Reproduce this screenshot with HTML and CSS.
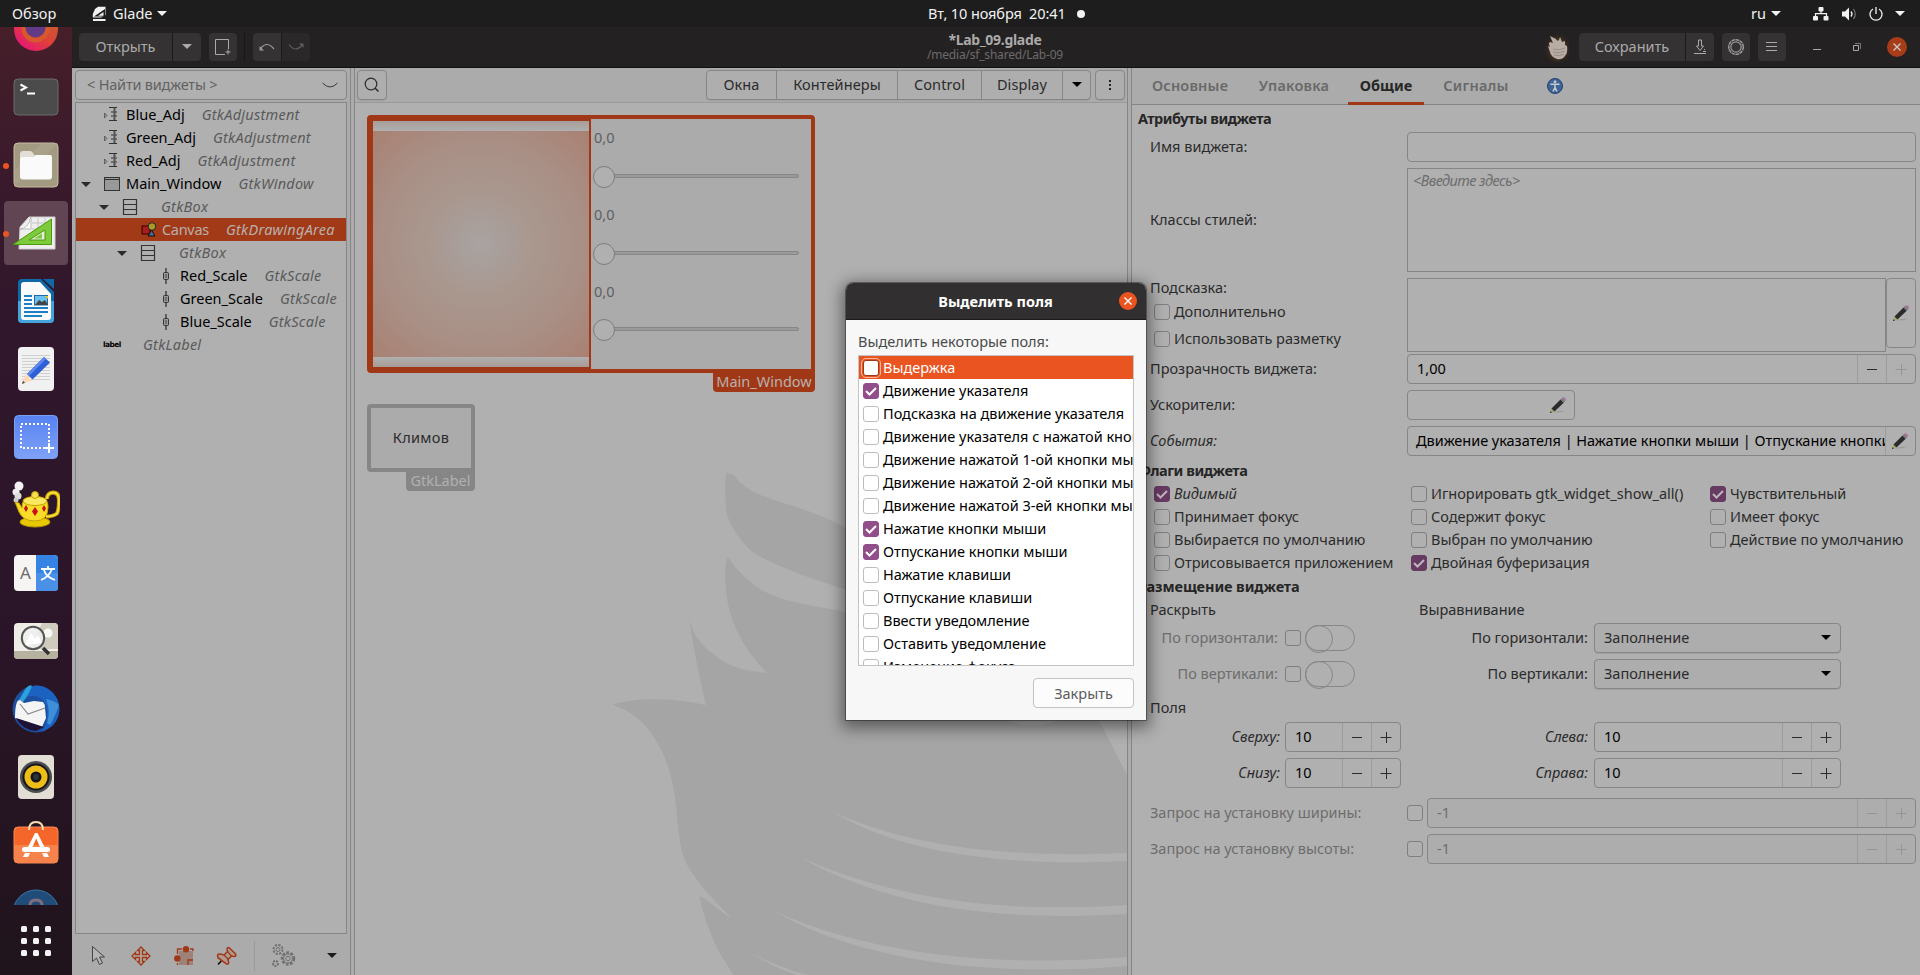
FILE: index.html
```html
<!DOCTYPE html>
<html lang="ru">
<head>
<meta charset="utf-8">
<title>Lab_09.glade</title>
<link rel="stylesheet" href="styles.css">
</head>
<body>
<svg class="defs" width="0" height="0">
  <defs>
    <symbol id="tri" viewBox="0 0 10 5"><path d="M0 0h10L5 5z"/></symbol>
    <symbol id="pencil" viewBox="0 0 18 18">
      <path d="M4 16.5q6-2.500 12-1.500q-5 1.500-12 1.500z" fill="#888" opacity=".6"/>
      <path d="M1 17l1.500-4.500 3 3z" fill="#a8a25e"/>
      <path d="M1 17l.6-1.800 1.200 1.200z" fill="#111"/>
      <path d="M2.500 12.500L11.500 3.500l3.200 3.200L5.500 15.500z" fill="#2b2b2b"/>
      <path d="M11.500 3.500l1.500-1.500 3.200 3.200-1.500 1.500z" fill="#777"/>
      <path d="M13 2q1.500-1.500 3.200.1t0 3.100z" fill="#a8719a"/>
    </symbol>
    <symbol id="minus" viewBox="0 0 12 12"><path d="M1 6.500h10" stroke="currentColor"/></symbol>
    <symbol id="plus" viewBox="0 0 12 12"><path d="M.5 6.500h11M6.500 1v11" stroke="currentColor"/></symbol>
    <symbol id="tick" viewBox="0 0 16 16"><path d="M3 8l3.500 3.500L13 5" fill="none" stroke="currentColor" stroke-width="2"/></symbol>
    <symbol id="adj" viewBox="0 0 18 18"><path d="M1.500 7v5l2.500-2.500z" fill="#999" stroke="#444" stroke-width=".7"/><path d="M6 1.500h8M8 6h6M8 10h6M6 14.500h8" stroke="#333"/><path d="M11.500 2v12" stroke="#555" stroke-width="2"/></symbol>
    <symbol id="box" viewBox="0 0 16 18"><path d="M1.500 1.500h13v15h-13zM1.500 6.500h13M1.500 11.500h13" fill="none" stroke="#333" stroke-width="1.200"/></symbol>
    <symbol id="scale" viewBox="0 0 10 18"><path d="M5 1v16" stroke="#333" stroke-width="1.300"/><rect x="2.500" y="5.500" width="5" height="7" rx="1" fill="#999" stroke="#333"/><path d="M4 8h2M4 10h2" stroke="#333" stroke-width=".8"/></symbol>
  </defs>
</svg>

<header class="topbar">
  <span class="tb-over">Обзор</span>
  <svg class="tb-glade" width="15" height="16" viewBox="0 0 15 16"><path d="M3 3L6 .8h7.500V9L9 11.500H.8V8z" fill="#f2f2f2"/><path d="M2 10.500L13 3v7.500z" fill="#1d1d1d"/><path d="M6 9.800l5.500-3.800v3.800z" fill="#f2f2f2"/><path d="M1 14h12.500" stroke="#f2f2f2" stroke-width="2"/></svg>
  <span class="tb-app">Glade</span>
  <svg class="tri tb-tri1" width="10" height="5"><use href="#tri"/></svg>
  <span class="tb-date">Вт, 10 ноября&nbsp; 20:41</span>
  <i class="tb-dot"></i>
  <span class="tb-lang">ru</span>
  <svg class="tri tb-tri2" width="10" height="5"><use href="#tri"/></svg>
  <svg class="tb-net" width="16" height="14" viewBox="0 0 16 14" fill="#f2f2f2"><rect x="5.500" y="0" width="5" height="4.500" rx="1"/><rect x="0" y="9" width="5" height="4.500" rx="1"/><rect x="10.500" y="9" width="5" height="4.500" rx="1"/><path d="M8 4v3M2.500 9.500V6.700h11v2.800" fill="none" stroke="#f2f2f2" stroke-width="1.200"/></svg>
  <svg class="tb-vol" width="15" height="14" viewBox="0 0 15 14"><path d="M0 4.500h3L7 .5v13L3 9.500H0z" fill="#f2f2f2"/><path d="M9 4.500q2 2.500 0 5" fill="none" stroke="#f2f2f2" stroke-width="1.300"/><path d="M11.500 2q3.500 5 0 10" fill="none" stroke="#777" stroke-width="1.200"/></svg>
  <svg class="tb-pow" width="14" height="14" viewBox="0 0 14 14"><path d="M4 2A6 6 0 1 0 10 2M7 0v7" fill="none" stroke="#f2f2f2" stroke-width="1.300"/></svg>
  <svg class="tri" width="10" height="5"><use href="#tri"/></svg>
</header>

<div class="desktop">
<nav class="dock">
  <div class="dock-list">
    <div class="slot"><svg width="48" height="48" viewBox="0 0 48 48"><defs><linearGradient id="ff" x1="1" y1="0" x2=".2" y2="1"><stop offset="0" stop-color="#b96b20"/><stop offset=".6" stop-color="#e0403c"/><stop offset="1" stop-color="#e8127a"/></linearGradient></defs><circle cx="24" cy="24" r="22" fill="url(#ff)"/><circle cx="23.500" cy="23.500" r="14" fill="#d8582c"/><circle cx="23.500" cy="22.500" r="10" fill="#633a86"/></svg></div>
    <div class="slot"><svg width="48" height="48" viewBox="0 0 48 48"><rect x="2" y="6" width="44" height="36" rx="4" fill="#4b4b4b" stroke="#6d6d6d"/><path d="M8.500 11.500l5.500 3-5.500 3" fill="none" stroke="#fff" stroke-width="2"/><path d="M15 20.500h8" stroke="#fff" stroke-width="2"/></svg></div>
    <div class="slot"><i class="run"></i><svg width="48" height="48" viewBox="0 0 48 48"><rect x="2" y="2" width="44" height="44" rx="4" fill="#a39a82" stroke="#c5bda6"/><path d="M2 30L30 2h16L2 46z" fill="#b0a890" opacity=".5"/><path d="M8 13q0-3 3-3h7q2 0 3 2l1 2h16q2 0 2 3v18q0 3-3 3H11q-3 0-3-3z" fill="#e3dfd6"/><rect x="8" y="16" width="32" height="22.500" rx="3" fill="#fafafa"/><path d="M8 18h12q2 0 4-4H38q2 0 2 3v10H8z" fill="#fafafa"/></svg></div>
    <div class="slot active"><i class="run"></i><svg width="48" height="48" viewBox="0 0 48 48"><path d="M8 18L17 8h26v32H7z" fill="#eee" stroke="#cfcfcf"/><path d="M8 20q8 0 11-12v12z" fill="#fff" stroke="#bbb"/><path d="M20 14h20M20 20h20M26 9v20M33 9v20" stroke="#bbb" stroke-width=".8"/><path d="M1 35.500L39.500 10v25.500z" fill="#7ccb3c" stroke="#4e9a06"/><path d="M17 31L33 21v10z" fill="#e8ede2" stroke="#4e9a06"/><path d="M22 29.500l8-5v5z" fill="#7ccb3c"/></svg></div>
    <div class="slot"><svg width="48" height="48" viewBox="0 0 48 48"><path d="M6 6q0-4 4-4h19l13 13v27q0 4-4 4H10q-4 0-4-4z" fill="#0d69a8"/><path d="M6 24h36v18q0 4-4 4H10q-4 0-4-4z" fill="#45a4dc"/><path d="M31 2h11v10z" fill="#0d69a8"/><path d="M9 8q0-3 3-3h16l11 12v23q0 3-3 3H12q-3 0-3-3z" fill="#fafafa"/><path d="M12 19h8M12 23h8M12 27h8M12 31h24M12 35h24M12 39h18" stroke="#1a7fc4" stroke-width="1.800"/><rect x="22.500" y="18.500" width="13" height="9.500" fill="#6cc0ee" stroke="#1a6aa8"/><path d="M23 28l4-5 3 2 3-2 3 5z" fill="#444"/><path d="M33 19h3v3z" fill="#f3c300"/></svg></div>
    <div class="slot"><svg width="48" height="48" viewBox="0 0 48 48"><rect x="6" y="2" width="36" height="44" rx="4" fill="#f1f1f1"/><path d="M10 10.500h28M10 13.500h28M10 16.500h28M10 19.500h28M10 22.500h28M10 25.500h28M10 28.500h28M10 31.500h28M10 34.500h28" stroke="#cfcfcf"/><path d="M10 39l3.500-10 6.500 6.500z" fill="#ffd9b8"/><path d="M10 39l1-3.200 2 2z" fill="#444"/><path d="M15 29L32 12l6 5.500-17.500 17z" fill="#2f5fd6"/><path d="M15 29L32 12l2 2-17 17z" fill="#5a88ef"/></svg></div>
    <div class="slot"><svg width="48" height="48" viewBox="0 0 48 48"><defs><linearGradient id="ss" x1="0" y1="0" x2="0" y2="1"><stop offset="0" stop-color="#5781f0"/><stop offset="1" stop-color="#7fa2f8"/></linearGradient></defs><rect x="2.500" y="2.500" width="43" height="43" rx="4" fill="url(#ss)" stroke="#7c9ff5"/><rect x="9" y="11" width="28" height="24" fill="none" stroke="#fff" stroke-width="2" stroke-dasharray="2 2"/><path d="M37 30v10M32 35h10" stroke="#fff" stroke-width="2"/></svg></div>
    <div class="slot"><svg width="48" height="48" viewBox="0 0 48 48"><circle cx="7" cy="5" r="4.500" fill="#f2f2f2"/><circle cx="4" cy="11" r="3.500" fill="#eee"/><circle cx="6" cy="15" r="3.500" fill="#ddd"/><circle cx="4" cy="19" r="2.500" fill="#ccc"/><path d="M35 18q0-6 6-6.500 6 0 6 8 0 9-2 13-4 3-11 3" fill="none" stroke="#c8a000" stroke-width="4"/><path d="M35 18q0-6 6-6.500 6 0 6 8 0 9-2 13-4 3-11 3" fill="none" stroke="#f6df3a" stroke-width="1.800"/><ellipse cx="23" cy="41" rx="15" ry="5" fill="#e8c800" stroke="#b89400"/><path d="M3 21l4 1 3 5q-1-11 13-11t13 10q0 14-13 14Q11 40 7 31z" fill="#f7dc28" stroke="#c8a000"/><ellipse cx="23" cy="20" rx="12" ry="4.500" fill="#fae960" stroke="#c8a000"/><circle cx="23" cy="14" r="3.500" fill="#f7e050" stroke="#c8a000"/><path d="M23 26l3 4.500-3 4.500-3-4.500zM14 24l2 3.500-2 3.500-2-3.500zM32 24l2 3.500-2 3.500-2-3.500z" fill="#c80f1a"/></svg></div>
    <div class="slot"><svg width="48" height="48" viewBox="0 0 48 48"><rect x="2" y="6" width="44" height="36" rx="4" fill="#f6f5f4"/><path d="M24 6h18q4 0 4 4v28q0 4-4 4H24z" fill="#3584e4"/><path d="M24 24h22v14q0 4-4 4H24z" fill="#4a90e6"/><text x="13.500" y="29.500" class="ic-a">A</text><path d="M29 20h14M36 17v3M40 20q-3 8-11 11M32 21q2 7 11 10" fill="none" stroke="#fff" stroke-width="1.800"/></svg></div>
    <div class="slot"><svg width="48" height="48" viewBox="0 0 48 48"><rect x="2" y="6" width="44" height="36" rx="4" fill="#eeeee6"/><path d="M30 6h12q4 0 4 4v22H18z" fill="#cfcbbf"/><path d="M2 34h44v4q0 4-4 4H6q-4 0-4-4z" fill="#b7b2a0"/><circle cx="36" cy="16" r="4.500" fill="#f8f8f4"/><circle cx="21" cy="21" r="11.200" fill="#eef0ee" fill-opacity=".85" stroke="#555" stroke-width="2"/><path d="M13 28l6-12 4 6 3-4 4 8z" fill="#fff"/><path d="M31 31l6 6" stroke="#333" stroke-width="3.500"/></svg></div>
    <div class="slot"><svg width="48" height="48" viewBox="0 0 48 48"><circle cx="24" cy="24" r="23.500" fill="#1d4f9e"/><path d="M24 .5A23.500 23.500 0 0 1 40 41L30 47q8-12 4-27Q28 8 14 12 11 3 24 .5z" fill="#1c62c0"/><path d="M34 14q10 2 13 6-4 12-9 20l-3-2q4-12-1-24z" fill="#3f8fd8"/><path d="M7 15L14 3Q18-1 20 1q-2 6-6 12l-3 4z" fill="#2ba0dc"/><path d="M5 17q1-2 3-2l4 3 10-2 9 1q2 2 2 6l1 10-4 9L3 33Q3 22 5 17z" fill="#f4f4f4"/><path d="M8 19l8 10 17-6" fill="none" stroke="#888" stroke-width="1.200"/><path d="M4 33l28 9-8 4Q10 45 4 33z" fill="#201035"/></svg></div>
    <div class="slot"><svg width="48" height="48" viewBox="0 0 48 48"><rect x="6" y="2" width="36" height="44" rx="4" fill="#e2ded4"/><circle cx="24" cy="24" r="16" fill="#4b4d50"/><circle cx="24" cy="24" r="13.500" fill="#15151c"/><circle cx="24" cy="24" r="11.500" fill="#efbd18"/><circle cx="24" cy="24" r="5.500" fill="#15151c"/><circle cx="24" cy="24" r="3" fill="#2e3436"/></svg></div>
    <div class="slot"><svg width="48" height="48" viewBox="0 0 48 48"><rect x="2" y="6" width="44" height="36" rx="4" fill="#f4662a" stroke="#f98a55"/><path d="M2 24h44v14q0 4-4 4H6q-4 0-4-4z" fill="#f6834c"/><path d="M17 9q0-8 7-8t7 8" fill="none" stroke="#f8dcb4" stroke-width="2"/><path d="M23 12h2.500L33 27h-4.500l-4.300-9.500L20 27h-4.500z" fill="#fff"/><rect x="10" y="26" width="28" height="5" rx="2.500" fill="#fff"/><path d="M13 32l-2 4h5l2-4zM35 32l2 4h-5l-2-4z" fill="#fff"/></svg></div>
    <div class="slot"><svg width="48" height="48" viewBox="0 0 48 48"><circle cx="24" cy="24" r="23" fill="#1f4c78" stroke="#3d76a8"/><path d="M18 16q0-5 6-5t6 5" fill="none" stroke="#806c7c" stroke-width="3"/></svg></div>
  </div>
  <div class="apps"><i></i><i></i><i></i><i></i><i></i><i></i><i></i><i></i><i></i></div>
</nav>

<main class="win">
  <div class="hbar">
    <div class="hgroup open"><span class="hb w94">Открыть</span><span class="hb w27"><svg class="gtri" width="10" height="5"><use href="#tri"/></svg></span></div>
    <span class="hb solo"><svg width="18" height="18" viewBox="0 0 18 18"><path d="M11 16.500H1.500v-15h13V11" fill="none" stroke="#aaa"/><path d="M14 11.500v5M11.500 14h5" stroke="#aaa"/></svg></span>
    <i class="hsep"></i>
    <div class="hgroup undo"><span class="hb w28"><svg width="18" height="10" viewBox="0 0 18 10"><path d="M3 6Q9-1.500 16 7" fill="none" stroke="#999" stroke-width="1.200"/><path d="M1.500 4v4.500H6z" fill="#999"/></svg></span><span class="hb w28 dark"><svg width="18" height="10" viewBox="0 0 18 10"><path d="M2 2.500Q8 11 15 3.500" fill="none" stroke="#5e5e5e" stroke-width="1.200"/><path d="M16.500 1.500V6L12 1.500z" fill="#5e5e5e"/></svg></span></div>
    <div class="htitle"><b>*Lab_09.glade</b><small>/media/sf_shared/Lab-09</small></div>
    <div class="hright">
      <svg class="bird" width="26" height="30" viewBox="0 0 26 30"><ellipse cx="15" cy="17" rx="8" ry="10" fill="#6b4512" class="glow"/><path d="M7 4l6 3q1 3 3 1l1-3 2 5 3-1v4l2 1q1 7-2 10-3 4-8 3-6-2-7-7-1-3-2-6l2 1q-2-4 0-5l3 1z" fill="#b8ada4"/><path d="M10 17q7 2 12-1M10 20q7 2 12-1M11 23q6 2 10-1" stroke="#8b8078" fill="none" stroke-width=".7"/></svg>
      <div class="hgroup save"><span class="hb w106">Сохранить</span><span class="hb w28"><svg width="14" height="16" viewBox="0 0 14 16"><path d="M5.500 1h3v6h2L7 11.500 3.500 7h2zM1 14.500h12M10 12.500h3M11 10.500h1" fill="none" stroke="#aaa"/></svg></span></div>
      <span class="hb solo"><svg width="18" height="18" viewBox="0 0 18 18"><circle cx="9" cy="9" r="7.300" fill="none" stroke="#999" stroke-width="1.500" stroke-dasharray="3.600 .6"/><circle cx="9" cy="9" r="5.200" fill="none" stroke="#999" stroke-width="1.200"/></svg></span>
      <span class="hb solo"><svg width="12" height="12" viewBox="0 0 12 12"><path d="M0 1.500h11M0 5.500h11M0 9.500h11" stroke="#aaa"/></svg></span>
      <i class="wmin"></i>
      <svg class="wres" width="10" height="10" viewBox="0 0 10 10"><path d="M1.500 3.500h5v5h-5z" fill="none" stroke="#aaa"/><path d="M3 1.500h5.500V7" fill="none" stroke="#777"/></svg>
      <svg class="wcl" width="20" height="20" viewBox="0 0 20 20"><circle cx="10" cy="10" r="10" fill="#a63c18"/><path d="M6.500 6.500l7 7M13.500 6.500l-7 7" stroke="#ccc" stroke-width="1.300"/></svg>
    </div>
  </div>

  <div class="cols">
    <section class="left">
      <div class="search"><span>&lt; Найти виджеты &gt;</span><svg width="16" height="6" viewBox="0 0 16 6"><path d="M.5 1q7.500 8 15 0" fill="none" stroke="#3a3a3a"/></svg></div>
      <div class="tree">
        <div class="tr l1"><svg class="ti" width="18" height="18"><use href="#adj"/></svg><b>Blue_Adj</b><em>GtkAdjustment</em></div>
        <div class="tr l1"><svg class="ti" width="18" height="18"><use href="#adj"/></svg><b>Green_Adj</b><em>GtkAdjustment</em></div>
        <div class="tr l1"><svg class="ti" width="18" height="18"><use href="#adj"/></svg><b>Red_Adj</b><em>GtkAdjustment</em></div>
        <div class="tr lw"><svg class="tt" width="10" height="5"><use href="#tri"/></svg><svg class="ti" width="18" height="16" viewBox="0 0 18 16"><rect x="1.500" y="1.500" width="15" height="13" fill="#999" stroke="#333"/><path d="M1 3.500h15" stroke="#333"/></svg><b>Main_Window</b><em>GtkWindow</em></div>
        <div class="tr l2"><svg class="tt" width="10" height="5"><use href="#tri"/></svg><svg class="ti" width="16" height="18"><use href="#box"/></svg><b></b><em>GtkBox</em></div>
        <div class="tr l3 sel"><svg class="ti" width="16" height="16" viewBox="0 0 16 16"><rect x="1" y="4" width="8" height="8" fill="#a81c1c" stroke="#300"/><circle cx="11" cy="4.500" r="3.800" fill="#a89a28" stroke="#222"/><path d="M10.500 8l3.500 6H7z" fill="#4a6a96" stroke="#111"/></svg><b>Canvas</b><em>GtkDrawingArea</em></div>
        <div class="tr l4"><svg class="tt" width="10" height="5"><use href="#tri"/></svg><svg class="ti" width="16" height="18"><use href="#box"/></svg><b></b><em>GtkBox</em></div>
        <div class="tr l5"><svg class="ti" width="10" height="18"><use href="#scale"/></svg><b>Red_Scale</b><em>GtkScale</em></div>
        <div class="tr l5"><svg class="ti" width="10" height="18"><use href="#scale"/></svg><b>Green_Scale</b><em>GtkScale</em></div>
        <div class="tr l5"><svg class="ti" width="10" height="18"><use href="#scale"/></svg><b>Blue_Scale</b><em>GtkScale</em></div>
        <div class="tr l6"><span class="minilabel">label</span><b></b><em>GtkLabel</em></div>
      </div>
      <div class="tools">
        <svg width="16" height="21" viewBox="0 0 16 21"><path d="M1.500 1.500v15l4-3.500 3 6.500 3-1.500-3-6h5z" fill="#b5b5b5" stroke="#444"/></svg>
        <svg width="20" height="20" viewBox="0 0 20 20"><path d="M10 1l3.500 3.500h-2v4h4v-2L19 10l-3.500 3.500v-2h-4v4h2L10 19l-3.500-3.500h2v-4h-4v2L1 10l3.500-3.500v2h4v-4h-2z" fill="#b5a59d" stroke="#a03818" stroke-width="1.300"/></svg>
        <svg width="20" height="20" viewBox="0 0 20 20"><path d="M5 5h14v14H5z" fill="#9c8278"/><path d="M3.500 8V3H8M16 3h3v2M3.500 17v2M14 19v-5h5" fill="none" stroke="#a03818" stroke-width="1.300"/><circle cx="12" cy="3.300" r="3.200" fill="#a03818"/><circle cx="3.300" cy="12.500" r="3.200" fill="#a03818"/></svg>
        <svg width="21" height="20" viewBox="0 0 21 20"><path d="M2 18.500L7 13" stroke="#111" stroke-width="1.600"/><path d="M1.500 9.500Q2 7.500 4 8l4 1 3.500-3.500-.5-3q.5-1.500 2.500-.5l6 6q1 2-1 2.500l-3-.5L12 13.500l.7 3.500q-.7 2-2.700.7l-8-6z" fill="#b09a90" stroke="#a03818" stroke-width="1.500"/><path d="M8 9l4.500 4.500M11.500 5.500L15.500 10" stroke="#a03818" stroke-width="1.200"/></svg>
        <i class="tsep"></i>
        <svg width="25" height="25" viewBox="0 0 25 25" fill="none" stroke="#707070"><circle cx="7" cy="6.500" r="4.500" stroke-width="2" stroke-dasharray="2.200 1.300"/><circle cx="7" cy="6.500" r="2"/><circle cx="17" cy="15.500" r="6" stroke-width="2.500" stroke-dasharray="2.800 1.500"/><circle cx="17" cy="15.500" r="4.500"/><circle cx="17" cy="15.500" r="2.200"/><circle cx="4.500" cy="20.500" r="2.500" stroke-width="2" stroke-dasharray="2 1"/></svg>
        <svg class="ttri" width="10" height="5"><use href="#tri"/></svg>
      </div>
    </section>

    <section class="center">
      <div class="ctool">
        <span class="btn mag"><svg width="16" height="16" viewBox="0 0 16 16"><circle cx="7" cy="7" r="5.800" fill="none" stroke="#2b2b2b" stroke-width="1.200"/><path d="M11 11l3.500 3.500" stroke="#2b2b2b" stroke-width="1.500"/></svg></span>
        <div class="bgroup"><span class="w69">Окна</span><span class="w120">Контейнеры</span><span class="w83">Control</span><span class="w81">Display</span><span class="w28b"><svg width="10" height="5"><use href="#tri"/></svg></span></div>
        <span class="btn kebab"><i></i><i></i><i></i></span>
      </div>
      <div class="work">
        <svg class="mark" width="772" height="872" viewBox="355 103 772 872">
          <g transform="translate(350 370) scale(.3333 .3858)" fill="#a5a5a5">
            <path d="M1128 266L1152 273C1180 305 1215 322 1300 345S1430 380 1500 417L1750 520 2230 880Q2262 930 2331 1050V1568H1151C1120 1525 1108 1515 1085 1465Q1058 1410 1048 1362C1085 1380 1110 1404 1144 1419C1090 1375 1040 1325 1017 1290S990 1230 983 1170 970 1040 925 970 830 882 788 867C850 850 960 847 1068 869Q1030 730 1018 640C1028 680 1040 700 1085 733S1170 780 1252 785C1190 735 1150 670 1135 610Q1118 540 1131 486H1136C1155 515 1190 545 1235 570 1300 603 1380 608 1486 628L1700 680V620L1486 568C1400 545 1280 512 1205 470 1160 435 1135 390 1130 370Q1123 330 1128 266z"/>
          </g>
          <g fill="#b0b0b0">
            <path d="M1004 719Q1032 731 1062 719z"/>
            <path d="M833 812C890 838 980 860 1127 853V861C980 868 890 846 833 812z"/>
            <path d="M801 858C880 892 980 915 1127 905V914C980 923 880 901 801 858z"/>
            <path d="M774 911C850 946 970 970 1127 957V966C970 979 850 955 774 911z"/>
            <path d="M753 954Q790 972 810 975H797Q775 968 753 954z"/>
          </g>
        </svg>
        <div class="mw">
          <div class="canvas"><i></i></div>
          <div class="scales">
            <div class="sc">0,0<i></i></div><div class="sc">0,0<i></i></div><div class="sc">0,0<i></i></div>
          </div>
        </div>
        <span class="tag tag1">Main_Window</span>
        <div class="lw-box">Климов</div>
        <span class="tag tag2">GtkLabel</span>
      </div>
    </section>

    <section class="right">
      <div class="tabs"><span class="t1">Основные</span><span class="t2">Упаковка</span><span class="t3 on">Общие</span><span class="t4">Сигналы</span><svg width="18" height="18" viewBox="0 0 18 18"><circle cx="9" cy="9" r="7.500" fill="#3f6598" stroke="#1f3f70"/><circle cx="9" cy="4.800" r="1.400" fill="#ccc"/><path d="M4.500 7.300h9M9 7v4M9 10.500l-2 4M9 10.500l2 4" stroke="#ccc" stroke-width="1.500"/></svg></div>
      <div class="props">
        <h3 class="h-a">Атрибуты виджета</h3>
        <div class="row"><label>Имя виджета:</label><div class="entry"></div></div>
        <div class="row tall"><label>Классы стилей:</label><div class="area ph">&lt;Введите здесь&gt;</div></div>
        <div class="row tip"><div class="tipl"><label>Подсказка:</label><span class="ck"><i></i>Дополнительно</span><span class="ck"><i></i>Использовать разметку</span></div><div class="area"></div><span class="editbtn"><svg width="18" height="18"><use href="#pencil"/></svg></span></div>
        <div class="row"><label>Прозрачность виджета:</label><div class="entry spin"><span>1,00</span><u><svg width="12" height="12"><use href="#minus"/></svg></u><u class="off"><svg width="12" height="12"><use href="#plus"/></svg></u></div></div>
        <div class="row"><label>Ускорители:</label><div class="entry short"><svg width="18" height="18"><use href="#pencil"/></svg></div></div>
        <div class="row"><label class="it">События:</label><div class="entry spin ev"><span>Движение указателя | Нажатие кнопки мыши | Отпускание кнопки мыши</span><u><svg width="18" height="18"><use href="#pencil"/></svg></u></div></div>
        <h3 class="h-b">Флаги виджета</h3>
        <div class="flags">
          <span class="ck on it"><i><svg width="16" height="16"><use href="#tick"/></svg></i>Видимый</span><span class="ck"><i></i>Игнорировать gtk_widget_show_all()</span><span class="ck on"><i><svg width="16" height="16"><use href="#tick"/></svg></i>Чувствительный</span>
          <span class="ck"><i></i>Принимает фокус</span><span class="ck"><i></i>Содержит фокус</span><span class="ck"><i></i>Имеет фокус</span>
          <span class="ck"><i></i>Выбирается по умолчанию</span><span class="ck"><i></i>Выбран по умолчанию</span><span class="ck"><i></i>Действие по умолчанию</span>
          <span class="ck"><i></i>Отрисовывается приложением</span><span class="ck on"><i><svg width="16" height="16"><use href="#tick"/></svg></i>Двойная буферизация</span>
        </div>
        <h3 class="h-c">Размещение виджета</h3>
        <div class="sub"><span>Раскрыть</span><span>Выравнивание</span></div>
        <div class="place"><label class="dim">По горизонтали:</label><i class="cb"></i><i class="sw"></i><label class="r2">По горизонтали:</label><div class="combo">Заполнение<svg width="10" height="5"><use href="#tri"/></svg></div></div>
        <div class="place"><label class="dim">По вертикали:</label><i class="cb"></i><i class="sw"></i><label class="r2">По вертикали:</label><div class="combo">Заполнение<svg width="10" height="5"><use href="#tri"/></svg></div></div>
        <div class="sub fields"><span>Поля</span></div>
        <div class="place2"><label class="it">Сверху:</label><div class="entry spin"><span>10</span><u><svg width="12" height="12"><use href="#minus"/></svg></u><u><svg width="12" height="12"><use href="#plus"/></svg></u></div><label class="it r2">Слева:</label><div class="entry spin"><span>10</span><u><svg width="12" height="12"><use href="#minus"/></svg></u><u><svg width="12" height="12"><use href="#plus"/></svg></u></div></div>
        <div class="place2"><label class="it">Снизу:</label><div class="entry spin"><span>10</span><u><svg width="12" height="12"><use href="#minus"/></svg></u><u><svg width="12" height="12"><use href="#plus"/></svg></u></div><label class="it r2">Справа:</label><div class="entry spin"><span>10</span><u><svg width="12" height="12"><use href="#minus"/></svg></u><u><svg width="12" height="12"><use href="#plus"/></svg></u></div></div>
        <div class="row req first"><label class="dim">Запрос на установку ширины:</label><i class="cb"></i><div class="entry spin dis"><span>-1</span><u class="off"><svg width="12" height="12"><use href="#minus"/></svg></u><u class="off"><svg width="12" height="12"><use href="#plus"/></svg></u></div></div>
        <div class="row req"><label class="dim">Запрос на установку высоты:</label><i class="cb"></i><div class="entry spin dis"><span>-1</span><u class="off"><svg width="12" height="12"><use href="#minus"/></svg></u><u class="off"><svg width="12" height="12"><use href="#plus"/></svg></u></div></div>
      </div>
    </section>
  </div>
</main>
</div>

<div class="dialog">
  <div class="dhead"><b>Выделить поля</b><svg width="18" height="18" viewBox="0 0 18 18"><circle cx="9" cy="9" r="9" fill="#e95420"/><path d="M5.500 5.500l7 7M12.500 5.500l-7 7" stroke="#fff" stroke-width="1.400"/></svg></div>
  <div class="dbody">
    <p>Выделить некоторые поля:</p>
    <div class="dlist">
      <div class="di cur"><i></i>Выдержка</div>
      <div class="di on"><i><svg width="16" height="16"><use href="#tick"/></svg></i>Движение указателя</div>
      <div class="di"><i></i>Подсказка на движение указателя</div>
      <div class="di"><i></i>Движение указателя с нажатой кнопкой</div>
      <div class="di"><i></i>Движение нажатой 1-ой кнопки мыши</div>
      <div class="di"><i></i>Движение нажатой 2-ой кнопки мыши</div>
      <div class="di"><i></i>Движение нажатой 3-ей кнопки мыши</div>
      <div class="di on"><i><svg width="16" height="16"><use href="#tick"/></svg></i>Нажатие кнопки мыши</div>
      <div class="di on"><i><svg width="16" height="16"><use href="#tick"/></svg></i>Отпускание кнопки мыши</div>
      <div class="di"><i></i>Нажатие клавиши</div>
      <div class="di"><i></i>Отпускание клавиши</div>
      <div class="di"><i></i>Ввести уведомление</div>
      <div class="di"><i></i>Оставить уведомление</div>
      <div class="di"><i></i>Изменение фокуса</div>
    </div>
    <div class="dfoot"><span>Закрыть</span></div>
  </div>
</div>
</body>
</html>
```
FILE: styles.css
```css
* { box-sizing: border-box; }
body { margin: 0; width: 1920px; height: 975px; overflow: hidden; position: relative; font: 14.5px/23px "Noto Sans", "Open Sans", sans-serif; color: #2b2b2b; background: #ababab; white-space: nowrap; }
svg { display: block; flex: none; }
.defs { position: absolute; }
i { display: block; flex: none; }
h3, p { margin: 0; font-size: 14.5px; }

/* top bar */
.topbar { height: 27px; background: #1d1d1d; color: #f2f2f2; display: flex; align-items: center; padding-left: 12px; }
.tri { fill: #f2f2f2; }
.tb-over { width: 80px; }
.tb-glade { margin-right: 6px; }
.tb-app { width: 39px; }
.tb-tri1 { margin-left: 5px; }
.tb-date { margin-left: 761px; width: 136px; letter-spacing: -.1px; padding-bottom: 1px; }
.tb-dot { width: 8px; height: 8px; border-radius: 50%; background: #f2f2f2; margin-left: 13px; }
.tb-lang { margin-left: 666px; width: 20px; }
.tb-net { margin-left: 32px; }
.tb-vol { margin-left: 13px; }
.tb-pow { margin-left: 12px; margin-right: 12px; }

.desktop { display: flex; height: 948px; }

/* dock */
.dock { width: 72px; background: linear-gradient(#461f29, #3a1a2b 15%, #31172c 30%, #2b1529 60%, #23141f 90%, #1f141c); flex: none; }
.dock-list { height: 878px; overflow: hidden; display: flex; flex-direction: column; padding-top: 0; }
.slot { height: 64px; width: 64px; margin: 0 4px 4px; flex: none; display: flex; align-items: center; justify-content: center; position: relative; border-radius: 4px; }
.slot:first-child { margin-top: -30px; }
.slot.active { background: #614552; }
.run { position: absolute; left: -1px; top: 30px; width: 6px; height: 6px; border-radius: 50%; background: #e95420; }
.ic-a { font: 17px "Noto Sans", sans-serif; text-anchor: middle; fill: #6b6b6b; }
.apps { display: grid; grid-template-columns: repeat(3, 6px); gap: 6px; padding: 21px; }
.apps i { width: 6px; height: 6px; border-radius: 1.5px; background: #f2f2f2; }

/* window */
.win { width: 1848px; display: flex; flex-direction: column; }
.hbar { height: 41px; background: #242122; border-bottom: 1px solid #121212; display: flex; align-items: center; padding: 0 0 0 7px; flex: none; color: #aaa; }
.hgroup { display: flex; gap: 1px; border-radius: 4px; overflow: hidden; background: #1b191a; }
.hb { height: 28px; background: #353233; display: flex; align-items: center; justify-content: center; padding-bottom: 1px; }
.hb.dark { background: #2a2829; }
.solo { width: 28px; border-radius: 4px; }
.gtri { fill: #aaa; }
.w94 { width: 93px; } .w27, .w28 { width: 28px; } .w106 { width: 106px; }
.open + .solo { margin-left: 8px; }
.hsep { width: 1px; height: 30px; background: #191718; margin: 0 8px 0 7px; }
.htitle { width: 200px; margin-left: 585px; display: flex; flex-direction: column; align-items: center; line-height: 16px; }
.htitle b { font-size: 14px; letter-spacing: -.3px; }
.htitle small { font-size: 12px; line-height: 14px; color: #6d6b6b; letter-spacing: -.2px; }
.hright { display: flex; align-items: center; margin-left: 450px; }
.bird { margin-right: 8px; margin-left: -2px; }
.hright .bird + .save { margin-left: 2px; }
.hright .solo { margin-left: 8px; }
.wmin { width: 8px; height: 1px; background: #aaa; margin: 5px 0 0 27px; }
.wres { margin-left: 31px; }
.wcl { margin-left: 25px; }
.glow { filter: blur(3px); }
.cols { display: flex; flex: 1; }

/* left */
.left { width: 279px; padding: 2px 3px 0; border-right: 1px solid #868686; flex: none; display: flex; flex-direction: column; }
.search { height: 30px; border: 1px solid #868686; border-radius: 4px; background: #b0b0b0; display: flex; align-items: center; justify-content: space-between; padding: 0 8px 1px 11px; color: #626262; width: 272px; letter-spacing: -.2px; }
.tree { margin-top: 2px; width: 272px; height: 832px; border: 1px solid #868686; background: #b0b0b0; }
.tr { height: 23px; display: flex; align-items: center; position: relative; }
.tr b { font-weight: 400; color: #000; }
.tr em { color: #5a5a5a; margin-left: 17px; letter-spacing: .25px; }
.tr .ti { margin-right: 8px; }
.tt { fill: #2b2b2b; margin-top: 2px; }
.l1 { padding-left: 27px; } .l1 .ti { margin-right: 5px; }
.lw { padding-left: 5px; } .lw .tt { margin-right: 12px; } .lw .ti { margin-right: 5px; }
.l2 { padding-left: 23px; } .l2 .tt, .l4 .tt { margin-right: 13px; }
.l3 { padding-left: 65px; } .l3 .ti { margin-right: 5px; }
.l3 b { letter-spacing: -.3px; }
.l4 { padding-left: 41px; }
.l2 em, .l4 em { margin-left: 15px; }
.l5 { padding-left: 85px; } .l5 .ti { margin-right: 9px; }
.l6 { padding-left: 27px; }
.l6 em { margin-left: 22px; }
.minilabel { font: bold 7.5px/10px "DejaVu Sans", sans-serif; color: #000; width: 18px; letter-spacing: -.6px; }
.sel { background: #a23a17; }
.sel b, .sel em { color: #b8b0ac; }
.tools { display: flex; align-items: center; height: 42px; padding: 1px 0 0 16px; }
.tools svg:nth-child(2) { margin-left: 24px; }
.tools svg:nth-child(3) { margin-left: 23px; }
.tools svg:nth-child(4) { margin-left: 22px; }
.tsep { width: 1px; height: 30px; background: #999; margin: 0 16px 0 17px; }
.tools .ttri { margin-left: 31px; fill: #1b1b1b; }

/* center */
.center { width: 774px; border-left: 1px solid #868686; border-right: 1px solid #868686; margin-left: 3px; flex: none; display: flex; flex-direction: column; }
.ctool { height: 35px; border-bottom: 1px solid #999; display: flex; padding: 2px 0 0 2px; }
.btn, .bgroup { height: 30px; border: 1px solid #868686; border-radius: 4px; display: flex; background: #aeaeae; align-items: center; justify-content: center; box-shadow: 0 1px 0 #a0a0a0; }
.mag { width: 30px; }
.bgroup { margin-left: 319px; align-items: stretch; letter-spacing: .1px; }
.bgroup span { display: flex; align-items: center; justify-content: center; border-left: 1px solid #868686; padding-bottom: 1px; }
.bgroup span:first-child { border-left: 0; }
.w69 { width: 69px; } .w120 { width: 121px; } .w83 { width: 84px; } .w81 { width: 81px; } .w28b { width: 28px; }
.kebab { width: 30px; margin-left: 4px; flex-direction: column; gap: 2px; }
.kebab i { width: 2px; height: 2px; background: #222; }
.work { position: relative; flex: 1; background: #b0b0b0; overflow: hidden; }
.mark { position: absolute; left: 0; top: 0; }
.mw { position: absolute; left: 12px; top: 12px; width: 448px; height: 258px; border: 4px solid #a03818; border-radius: 4px 4px 0 4px; background: #ababab; display: flex; }
.canvas { width: 220px; border: 2px solid #a03818; padding: 10px 0; background: linear-gradient(#a79d99, #afb0b0 10px, #afb0b0 236px, #a79a94 100%); }
.canvas i { height: 226px; background: radial-gradient(circle at 50% 50%, #a8a3a2, #a9978e 35%, #a98f85 65%, #a98172 100%); }
.scales { padding: 7px 0 0 3px; color: #5f5f5f; }
.sc { height: 77px; line-height: 23px; position: relative; width: 205px; }
.sc i { position: absolute; left: 0; top: 48px; width: 205px; height: 4px; border: 1px solid #868686; background: #9a9a9a; border-radius: 2px; }
.sc:last-child i { top: 47px; }
.sc i::after { content: ""; position: absolute; left: -2px; top: -9px; width: 20px; height: 20px; border-radius: 50%; border: 1px solid #7d7d7d; background: #b0b0b0; }
.tag { position: absolute; height: 19px; line-height: 17px; border-radius: 0 0 4px 4px; color: #b8b0ac; text-align: center; }
.tag1 { left: 358px; top: 270px; width: 102px; background: #a03818; }
.lw-box { position: absolute; left: 12px; top: 301px; width: 108px; height: 68px; border: 4px solid #868686; border-radius: 4px 4px 0 4px; background: #ababab; display: flex; align-items: center; justify-content: center; letter-spacing: .3px; padding-bottom: 2px; }
.tag2 { left: 51px; top: 369px; width: 69px; background: #868686; color: #b0b0b0; }

/* right */
.right { width: 789px; border-left: 1px solid #868686; margin-left: 3px; background: #b0b0b0; }
.tabs { height: 37px; background: #ababab; border-bottom: 1px solid #868686; display: flex; font-weight: 600; color: #696969; align-items: center; }
.tabs span { height: 37px; line-height: 35px; text-align: center; }
.t1 { width: 108px; padding-left: 8px; } .t2 { width: 108px; } .t3 { width: 76px; } .t4 { width: 104px; }
.t1, .t2, .t4 { letter-spacing: .2px; }
.tabs .on { color: #262626; border-bottom: 3px solid #a03818; font-weight: 700; }
.tabs svg { margin-left: 18px; }
.props { padding: 0 4px 0 18px; }
h3 { margin-left: -12px; height: 26px; line-height: 26px; font-weight: 700; color: #262626; letter-spacing: -.45px; }
.h-a { margin-bottom: 1px; }
.h-b { line-height: 29px; margin-top: -6px; }
.h-c { height: 24px; line-height: 24px; letter-spacing: -.1px; }
.row { height: 30px; margin-bottom: 6px; display: grid; grid-template-columns: 257px 1fr; align-items: center; }
.row > label { padding-bottom: 2px; }
.entry { height: 30px; border: 1px solid #868686; border-radius: 4px; background: #b0b0b0; min-width: 0; }
.area { height: 100%; border: 1px solid #868686; }
.ph { font-style: italic; color: #6d6d6d; padding: 0 5px; letter-spacing: -.55px; }
.tall { height: 104px; }
.tip { height: 70px; grid-template-columns: 257px 479px 1px 29px; align-items: stretch; }
.tip .editbtn { grid-column: 3 / 5; border: 1px solid #868686; border-radius: 4px; height: 70px; display: flex; align-items: center; justify-content: center; width: 30px; }
.tipl { display: flex; flex-direction: column; }
.tipl label { height: 20px; line-height: 18px; }
.tipl .ck { height: 27px; padding-left: 4px; }
.ck { display: flex; align-items: center; }
.ck i, .cb { width: 16px; height: 16px; border: 1px solid #7f7f7f; border-radius: 3px; margin-right: 4px; color: #c0b4be; }
.ck.on i { background: #673a62; border-color: #673a62; }
.ck i svg { margin: -1px; }
.it { font-style: italic; }
.spin { display: flex; color: #000; align-items: center; }
.spin span { flex: 1; padding: 0 0 2px 9px; overflow: hidden; min-width: 0; }
.spin u { width: 29px; height: 28px; border-left: 1px solid #9c9c9c; display: flex; align-items: center; justify-content: center; color: #2b2b2b; }
.spin u.off { color: #959595; }
.ev span { padding-left: 8px; letter-spacing: -.03px; }
.ev u { width: 30px; padding-right: 2px; }
.short { width: 168px; display: flex; align-items: center; justify-content: flex-end; padding-right: 7px; }
.flags { display: grid; grid-template-columns: 257px 299px 1fr; grid-auto-rows: 23px; padding-left: 4px; }
.sub { display: grid; grid-template-columns: 269px 1fr; height: 25px; line-height: 22px; }
.fields { height: 27px; line-height: 25px; }
.place { display: grid; grid-template-columns: 128px 16px 50px 233px 247px; column-gap: 0; height: 30px; margin-bottom: 6px; align-items: center; }
.place label, .place2 label { text-align: right; padding-bottom: 1px; }
.place .cb { margin-left: 7px; }
.place .sw { margin-left: 11px; }
.place .r2 { grid-column: 4; margin-right: -11px; }
.place .combo { grid-column: 5; margin-left: 17px; }
.combo { width: 247px; height: 30px; border: 1px solid #868686; border-radius: 4px; display: flex; align-items: center; justify-content: space-between; padding: 0 9px 1px; background: #adadad; box-shadow: 0 1px 0 #a0a0a0; }
.sw { width: 50px; height: 26px; border: 1px solid #868686; border-radius: 13px; }
.sw::before { content: ""; display: block; width: 26px; height: 26px; margin: -1px; border: 1px solid #868686; border-radius: 50%; }
.dim { color: #6d6d6d; }
.place2 { display: grid; grid-template-columns: 130px 116px 187px 247px; height: 30px; margin-bottom: 6px; align-items: center; }
.place2 .entry:nth-child(2) { margin-left: 5px; margin-right: -5px; }
.place2 .r2 { margin-right: -5px; }
.place2 .entry:nth-child(4) { margin-left: 11px; margin-right: -11px; }
.req { grid-template-columns: 257px 20px 1fr; }
.first { margin-top: 10px; }
.dis { background: #adadad; }
.dis span { color: #6d6d6d; }

/* dialog */
.dialog { position: absolute; left: 846px; top: 283px; width: 300px; height: 437px; border-radius: 7px 7px 0 0; background: #f7f7f7; box-shadow: 0 0 0 1px rgba(0,0,0,.35), 0 4px 16px 4px rgba(0,0,0,.45); }
.dhead { height: 37px; background: #322f30; border-radius: 7px 7px 0 0; border-bottom: 1px solid #1c1a1b; color: #fff; display: flex; align-items: center; padding-left: 40px; }
.dhead b { width: 219px; text-align: center; }
.dhead svg { margin-left: 14px; }
.dbody { padding: 9px 12px 0; }
.dbody p { height: 26px; line-height: 24px; color: #4a4a4a; }
.dlist { width: 276px; height: 311px; border: 1px solid #c3c3c3; background: #fff; overflow: hidden; color: #000; }
.di { height: 23px; display: flex; align-items: center; padding-left: 4px; }
.di i { width: 16px; height: 16px; border: 1px solid #bdbdbd; border-radius: 3px; margin-right: 4px; background: #fff; color: #fff; }
.di.on i { background: #924d8b; border-color: #924d8b; }
.di i svg { margin: -1px; }
.di.cur { background: #e95420; color: #fff; }
.di.cur i { border-color: #a03818; outline: 1px solid #f6b79f; outline-offset: 1px; }
.dfoot { display: flex; justify-content: flex-end; padding-top: 12px; }
.dfoot span { width: 101px; height: 30px; border: 1px solid #c3c3c3; border-radius: 4px; background: #fcfcfc; text-align: center; line-height: 28px; color: #5c5c5c; }
```
